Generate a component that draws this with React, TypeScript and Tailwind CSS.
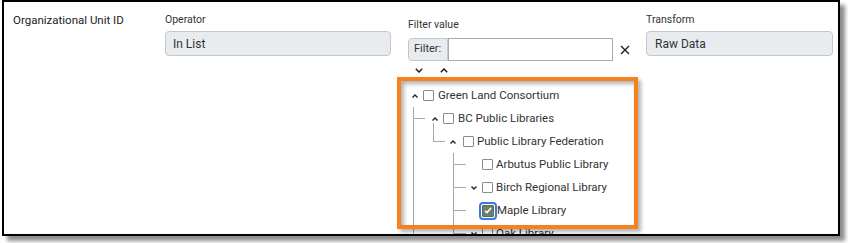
import React from 'react';

const font = { fontFamily: 'Roboto, "Noto Sans", sans-serif' };

const Chevron = ({ dir = 'up', className = '' }: { dir?: 'up' | 'down'; className?: string }) => (
  <svg width="6" height="4" viewBox="0 0 6 4" className={`shrink-0 ${className}`}>
    <path
      d={dir === 'up' ? 'M0.5 3.5 L3 1 L5.5 3.5' : 'M0.5 0.5 L3 3 L5.5 0.5'}
      fill="none"
      stroke="#222"
      strokeWidth="1.4"
    />
  </svg>
);

const Checkbox = ({ checked = false, className = '' }: { checked?: boolean; className?: string }) =>
  checked ? (
    <span
      className={`shrink-0 w-[12px] h-[12px] bg-[#6f7d6c] border border-[#5c6a5a] rounded-[1px] flex items-center justify-center outline-2 outline-[#3a7bd5] outline-offset-[1px] ${className}`}
    >
      <svg width="8" height="7" viewBox="0 0 8 7">
        <path d="M1 3.8 L3 5.6 L7 1" fill="none" stroke="#fff" strokeWidth="1.6" />
      </svg>
    </span>
  ) : (
    <span className={`shrink-0 w-[11px] h-[11px] bg-white border border-[#8a8a8a] rounded-[1px] ${className}`} />
  );

const Leaf = ({ label, chevron, checked }: { label: string; chevron?: boolean; checked?: boolean }) => (
  <div className="flex h-[23px] items-center">
    <span className="w-[12px] h-px bg-[#a8a8a8] shrink-0" />
    <span className="w-[6px] ml-[5px] shrink-0 flex">{chevron && <Chevron dir="down" />}</span>
    <Checkbox checked={checked} className="ml-[5px]" />
    <span className="ml-[3px] text-[11.5px] text-[#333] whitespace-nowrap">{label}</span>
  </div>
);

export default function App() {
  return (
    <div className="w-[848px] h-[243px] bg-white" style={font}>
      <div className="ml-[2px] w-[838px] h-[236px] border-2 border-black shadow-[5px_5px_4px_rgba(0,0,0,0.45)] relative overflow-hidden">
        <div className="flex pt-[10px] pl-[9px]">
          <div className="w-[152px] text-[11.5px] leading-[16px] text-[#222]">Organizational Unit ID</div>

          <div className="w-[226px]">
            <div className="text-[10.5px] leading-[16px] text-[#333]">Operator</div>
            <div className="mt-[3px] h-[25px] bg-[#e9ecef] border border-[#c4c8cc] rounded-[4px] flex items-center pl-[7px] text-[12px] text-[#333]">
              In List
            </div>
          </div>

          <div className="w-[238px] ml-[17px] mt-[5px]">
            <div className="text-[10.5px] leading-[16px] text-[#333]">Filter value</div>
            <div className="mt-[5px] flex items-center">
              <div className="h-[23px] w-[40px] bg-[#e9ecef] border border-[#c4c8cc] rounded-l-[4px] flex items-center pl-[5px] text-[11px] text-[#333]">
                Filter:
              </div>
              <div className="h-[23px] w-[165px] border border-[#a9a9a9] bg-white" />
              <svg width="10" height="10" viewBox="0 0 10 10" className="ml-[7px]">
                <path d="M1 1 L9 9 M9 1 L1 9" stroke="#222" strokeWidth="1.4" />
              </svg>
            </div>
            <div className="mt-[3px] h-[12px] flex items-center">
              <svg width="8" height="5" viewBox="0 0 8 5" className="ml-[7px]">
                <path d="M0.8 0.8 L4 4 L7.2 0.8" fill="none" stroke="#222" strokeWidth="1.5" />
              </svg>
              <svg width="8" height="5" viewBox="0 0 8 5" className="ml-[17px]">
                <path d="M0.8 4.2 L4 1 L7.2 4.2" fill="none" stroke="#222" strokeWidth="1.5" />
              </svg>
            </div>

            <div className="mt-[8px]">
              <div className="flex h-[23px] items-center pl-[4px]">
                <Chevron dir="up" />
                <Checkbox className="ml-[5px]" />
                <span className="ml-[4px] text-[11.5px] text-[#333] whitespace-nowrap">Green Land Consortium</span>
              </div>
              <div className="ml-[5px] border-l border-[#a8a8a8]">
                <div className="flex h-[23px] items-center">
                  <span className="w-[11px] h-px bg-[#a8a8a8] shrink-0" />
                  <Chevron dir="up" className="ml-[7px]" />
                  <Checkbox className="ml-[5px]" />
                  <span className="ml-[4px] text-[11.5px] text-[#333] whitespace-nowrap">BC Public Libraries</span>
                </div>
                <div>
                  <div className="flex h-[23px] items-center pl-[19px]">
                    <span className="self-start -mt-[7px] w-[12px] h-[19px] border-l border-b border-[#a8a8a8] shrink-0" />
                    <Chevron dir="up" className="ml-[5px]" />
                    <Checkbox className="ml-[7px]" />
                    <span className="ml-[3px] text-[11.5px] text-[#333] whitespace-nowrap">Public Library Federation</span>
                  </div>
                  <div className="ml-[39px] border-l border-[#a8a8a8]">
                    <Leaf label="Arbutus Public Library" />
                    <Leaf label="Birch Regional Library" chevron />
                    <Leaf label="Maple Library" checked />
                    <Leaf label="Oak Library" chevron />
                  </div>
                </div>
              </div>
            </div>
          </div>

          <div className="w-[187px]">
            <div className="text-[10.5px] leading-[16px] text-[#333]">Transform</div>
            <div className="mt-[3px] h-[25px] bg-[#e9ecef] border border-[#c4c8cc] rounded-[4px] flex items-center pl-[8px] text-[12px] text-[#333]">
              Raw Data
            </div>
          </div>
        </div>

        <div className="absolute left-[393px] top-[75px] w-[241px] h-[152px] border-4 border-[#f5821f] shadow-[3px_3px_4px_rgba(0,0,0,0.3),inset_3px_3px_4px_rgba(0,0,0,0.3)]" />
      </div>
    </div>
  );
}
